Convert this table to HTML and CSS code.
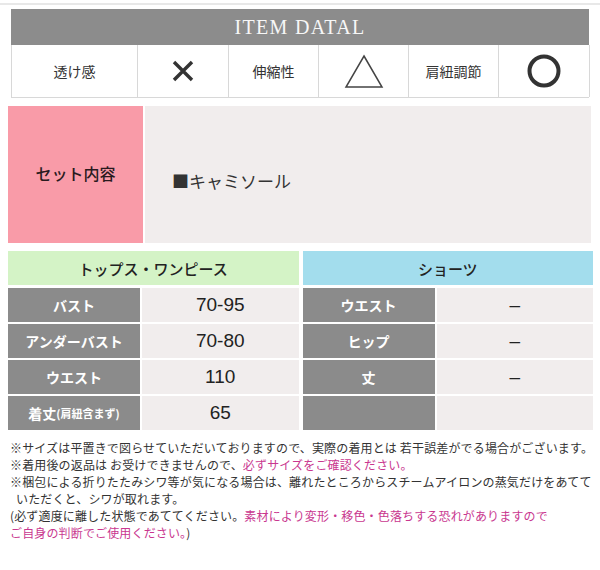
FILE: index.html
```html
<!DOCTYPE html>
<html lang="ja">
<head>
<meta charset="utf-8">
<link rel="stylesheet" href="styles.css">
</head>
<body>
<div class="topline"></div>
<section class="item">
  <h1 class="item-title">ITEM DATAL</h1>
  <div class="attrs">
    <div class="attr-label">透け感</div>
    <div class="attr-mark">
      <svg width="22" height="22" viewBox="0 0 22 22"><path d="M2 2 L20 20 M20 2 L2 20" stroke="#333" stroke-width="3.4" fill="none"/></svg>
    </div>
    <div class="attr-label">伸縮性</div>
    <div class="attr-mark">
      <svg width="40" height="35" viewBox="0 0 40 35"><path d="M20 2 L38 33 L2 33 Z" stroke="#444" stroke-width="1.5" fill="none" stroke-linejoin="miter"/></svg>
    </div>
    <div class="attr-label">肩紐調節</div>
    <div class="attr-mark">
      <svg width="36" height="36" viewBox="0 0 36 36"><circle cx="18" cy="18" r="14.5" stroke="#333" stroke-width="4" fill="none"/></svg>
    </div>
  </div>
</section>

<section class="set">
  <div class="set-label">セット内容</div>
  <div class="set-body">■キャミソール</div>
</section>

<section class="sizes">
  <div class="size-table">
    <div class="size-head green">トップス・ワンピース</div>
    <div class="size-row"><div class="size-key">バスト</div><div class="size-val">70-95</div></div>
    <div class="size-row"><div class="size-key">アンダーバスト</div><div class="size-val">70-80</div></div>
    <div class="size-row"><div class="size-key">ウエスト</div><div class="size-val">110</div></div>
    <div class="size-row"><div class="size-key">着丈<span class="small">(肩紐含まず)</span></div><div class="size-val">65</div></div>
  </div>
  <div class="size-table">
    <div class="size-head blue">ショーツ</div>
    <div class="size-row"><div class="size-key">ウエスト</div><div class="size-val">–</div></div>
    <div class="size-row"><div class="size-key">ヒップ</div><div class="size-val">–</div></div>
    <div class="size-row"><div class="size-key">丈</div><div class="size-val">–</div></div>
    <div class="size-row"><div class="size-key"></div><div class="size-val"></div></div>
  </div>
</section>

<section class="notes">
  <p>※サイズは平置きで図らせていただいておりますので、実際の着用とは 若干誤差がでる場合がございます。</p>
  <p>※着用後の返品は お受けできませんので、<span class="pink">必ずサイズをご確認ください。</span></p>
  <p>※梱包による折りたたみシワ等が気になる場合は、離れたところからスチームアイロンの蒸気だけをあてて</p>
  <p class="indent">いただくと、シワが取れます。</p>
  <p>(必ず適度に離した状態であててください。<span class="pink">素材により変形・移色・色落ちする恐れがありますので</span></p>
  <p><span class="pink">ご自身の判断でご使用ください。</span>)</p>
</section>
</body>
</html>
```

FILE: styles.css
```css
html, body {
  margin: 0;
  padding: 0;
  background: #fff;
}
body {
  width: 600px;
  height: 570px;
  overflow: hidden;
  font-family: "Noto Sans CJK JP", "Noto Sans", sans-serif;
  color: #333;
}
.topline {
  height: 2px;
  margin-top: 3px;
  background: #e8e8e8;
}
.item {
  margin: 4px 11px 0 11px;
}
.item-title {
  margin: 0;
  height: 36px;
  background: #8c8c8c;
  color: #f7f7f7;
  font-family: "Liberation Serif", "DejaVu Serif", serif;
  font-weight: normal;
  font-size: 20px;
  letter-spacing: 1.3px;
  line-height: 37px;
  text-align: center;
}
.attrs {
  display: grid;
  grid-template-columns: 126px 91px 90px 90px 90px 91px;
  height: 53px;
  border-left: 1px solid #d8d8d8;
  border-bottom: 1px solid #d8d8d8;
  box-sizing: border-box;
}
.attrs > div {
  border-right: 1px solid #d8d8d8;
  display: flex;
  align-items: center;
  justify-content: center;
}
.attr-label {
  font-size: 14px;
  color: #333;
}
.set {
  display: flex;
  gap: 2px;
  margin: 8px 9px 0 8px;
  height: 137px;
}
.set-label {
  width: 135px;
  background: #f99ba8;
  display: flex;
  align-items: center;
  justify-content: center;
  font-size: 16px;
  font-weight: 500;
  color: #2a1a1e;
  padding-bottom: 4px;
  box-sizing: border-box;
}
.set-body {
  flex: 1;
  background: #f1eded;
  display: flex;
  align-items: center;
  padding-left: 27px;
  padding-top: 12px;
  font-size: 17px;
  color: #333;
}
.sizes {
  display: flex;
  gap: 4px;
  margin: 8px 7px 0 8px;
}
.size-table {
  flex: 1;
  display: flex;
  flex-direction: column;
  gap: 2px;
}
.size-head {
  height: 34px;
  margin-bottom: 1px;
  display: flex;
  align-items: center;
  justify-content: center;
  font-size: 15px;
  font-weight: 500;
  color: #222;
}
.green { background: #d4f3c6; }
.blue { background: #a3dded; }
.size-row {
  display: flex;
  gap: 2px;
  height: 34px;
}
.size-key {
  width: 132px;
  background: #8b8b8b;
  color: #fff;
  font-weight: bold;
  font-size: 14px;
  display: flex;
  align-items: center;
  justify-content: center;
}
.size-key .small {
  font-size: 11px;
  font-weight: bold;
}
.size-val {
  flex: 1;
  background: #f1eded;
  display: flex;
  align-items: center;
  justify-content: center;
  font-family: "Liberation Sans", "Noto Sans CJK JP", sans-serif;
  font-size: 19px;
  color: #222;
}
.notes {
  margin: 9px 0 0 10px;
  font-size: 12px;
  letter-spacing: 0.15px;
  line-height: 17px;
  color: #333;
}
.notes p {
  margin: 0;
  white-space: nowrap;
}
.notes .indent {
  padding-left: 6px;
}
.pink {
  color: #c9378f;
}
```
